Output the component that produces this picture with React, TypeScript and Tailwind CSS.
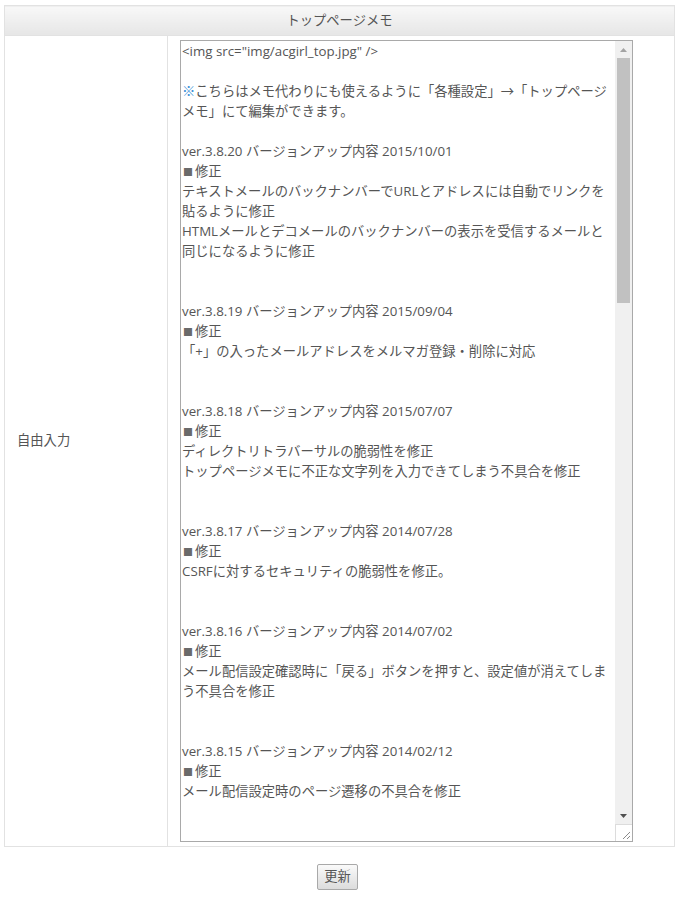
const lines: string[] = [
  '<img src="img/acgirl_top.jpg" />',
  "",
  "※こちらはメモ代わりにも使えるように「各種設定」→「トップページ",
  "メモ」にて編集ができます。",
  "",
  "ver.3.8.20 バージョンアップ内容 2015/10/01",
  "■修正",
  "テキストメールのバックナンバーでURLとアドレスには自動でリンクを",
  "貼るように修正",
  "HTMLメールとデコメールのバックナンバーの表示を受信するメールと",
  "同じになるように修正",
  "",
  "",
  "ver.3.8.19 バージョンアップ内容 2015/09/04",
  "■修正",
  "「+」の入ったメールアドレスをメルマガ登録・削除に対応",
  "",
  "",
  "ver.3.8.18 バージョンアップ内容 2015/07/07",
  "■修正",
  "ディレクトリトラバーサルの脆弱性を修正",
  "トップページメモに不正な文字列を入力できてしまう不具合を修正",
  "",
  "",
  "ver.3.8.17 バージョンアップ内容 2014/07/28",
  "■修正",
  "CSRFに対するセキュリティの脆弱性を修正。",
  "",
  "",
  "ver.3.8.16 バージョンアップ内容 2014/07/02",
  "■修正",
  "メール配信設定確認時に「戻る」ボタンを押すと、設定値が消えてしま",
  "う不具合を修正",
  "",
  "",
  "ver.3.8.15 バージョンアップ内容 2014/02/12",
  "■修正",
  "メール配信設定時のページ遷移の不具合を修正",
  "",
  "",
];

function MemoLine({ text }: { text: string }) {
  if (text.startsWith("※")) {
    return (
      <div className="h-5 whitespace-pre">
        <span className="text-[#3a8fd6]">※</span>
        {text.slice(1)}
      </div>
    );
  }
  if (text.startsWith("■")) {
    return (
      <div className="h-5 whitespace-pre">
        <span className="text-[#6a6a6a] text-[10px] mr-[2px] ml-[1px]">■</span>
        {text.slice(1)}
      </div>
    );
  }
  return <div className="h-5 whitespace-pre">{text || " "}</div>;
}

function Scrollbar() {
  return (
    <div className="w-[17px] shrink-0 bg-[#f0f0f0] flex flex-col">
      <div className="h-[17px] flex items-center justify-center">
        <svg width="7" height="4" viewBox="0 0 7 4">
          <path d="M3.5 0 L7 4 L0 4 Z" fill="#a3a3a3" />
        </svg>
      </div>
      <div className="flex-1 px-[2px]">
        <div className="h-[245px] bg-[#c1c1c1]" />
      </div>
      <div className="h-[17px] flex items-center justify-center">
        <svg width="7" height="4" viewBox="0 0 7 4">
          <path d="M0 0 L7 0 L3.5 4 Z" fill="#505050" />
        </svg>
      </div>
      <div className="h-[17px] bg-white border-l border-t border-[#dcdcdc] relative">
        <svg className="absolute right-[1px] bottom-[1px]" width="9" height="9" viewBox="0 0 9 9">
          <path d="M8 1 L1 8 M8 5 L5 8" stroke="#8a8a8a" strokeWidth="1" />
        </svg>
      </div>
    </div>
  );
}

export default function App() {
  return (
    <div
      className="min-h-screen bg-white text-[#555] text-[13.3px] pt-[5px] px-1"
      style={{ fontFamily: '"Open Sans", "Noto Sans CJK JP", sans-serif' }}
    >
      <table className="w-full border-collapse">
        <tbody>
          <tr>
            <th
              colSpan={2}
              className="h-[30px] p-0 border border-[#e2e2e2] bg-gradient-to-b from-[#f8f8f8] to-[#e6e6e6] font-normal text-center text-[#555]"
            >
              トップページメモ
            </th>
          </tr>
          <tr>
            <td className="w-[163px] border border-[#e2e2e2] px-3 align-middle">自由入力</td>
            <td className="border border-[#e2e2e2] pl-3 pr-[41px] py-[4px]">
              <div className="h-[802px] border border-[#a9a9a9] flex overflow-hidden">
                <div className="flex-1 pl-[1px] leading-5">
                  {lines.map((t, i) => (
                    <MemoLine key={i} text={t} />
                  ))}
                </div>
                <Scrollbar />
              </div>
            </td>
          </tr>
        </tbody>
      </table>
      <div className="flex justify-center mt-[17px]">
        <button className="h-[26px] px-[6px] border border-[#a9a9a9] rounded-[2px] bg-gradient-to-b from-[#fafafa] to-[#dcdcdc] text-[#555] text-[13.3px] -translate-x-[2px]">
          更新
        </button>
      </div>
    </div>
  );
}
